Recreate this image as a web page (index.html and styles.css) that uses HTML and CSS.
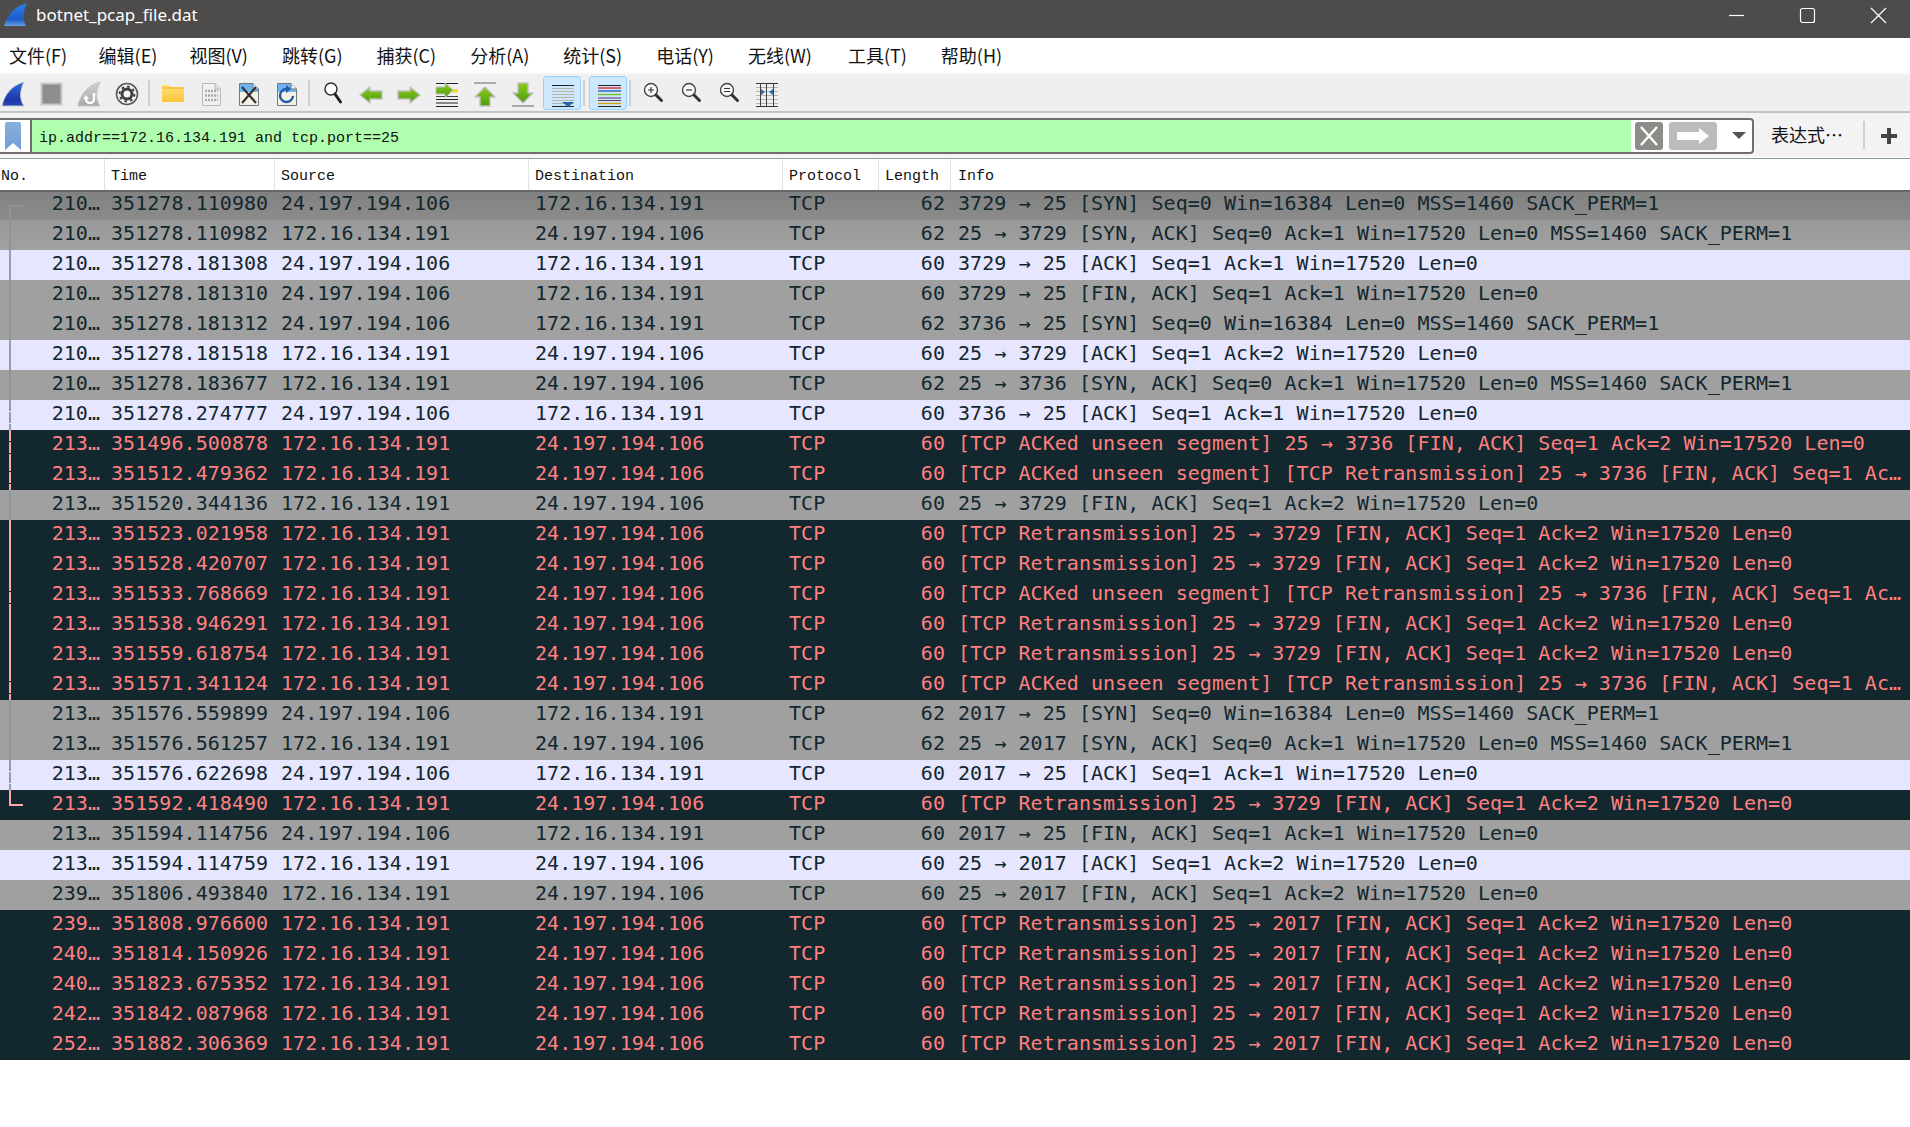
FILE: index.html
```html
<!DOCTYPE html>
<html lang="zh">
<head>
<meta charset="utf-8">
<title>botnet_pcap_file.dat</title>
<link rel="stylesheet" href="styles.css">
</head>
<body>
<svg class="defs" width="0" height="0" aria-hidden="true">
  <defs>
    <linearGradient id="gFin" x1="0" y1="0" x2="0" y2="1"><stop offset="0" stop-color="#2f6fd8"/><stop offset="0.75" stop-color="#1d35a8"/><stop offset="1" stop-color="#2a48b8"/></linearGradient>
    <linearGradient id="gTitleFin" x1="0" y1="0" x2="0" y2="1"><stop offset="0" stop-color="#2a80ee"/><stop offset="0.72" stop-color="#1c5cc8"/><stop offset="1" stop-color="#6aa2e0"/></linearGradient>
    <linearGradient id="gGray" x1="0" y1="0" x2="0" y2="1"><stop offset="0" stop-color="#d0d0d0"/><stop offset="1" stop-color="#a8a8a8"/></linearGradient>
    <linearGradient id="gFolder" x1="0" y1="0" x2="0" y2="1"><stop offset="0" stop-color="#ffe27a"/><stop offset="1" stop-color="#fcc33a"/></linearGradient>
    <linearGradient id="gGreen" x1="0" y1="0" x2="0" y2="1"><stop offset="0" stop-color="#8ccb22"/><stop offset="1" stop-color="#4c9c0c"/></linearGradient>
    <linearGradient id="gMark" x1="0" y1="0" x2="0" y2="1"><stop offset="0" stop-color="#8ab0dc"/><stop offset="1" stop-color="#6d9ed4"/></linearGradient>
  </defs>
</svg>

<header class="titlebar">
  <svg class="app-icon" width="24" height="24" viewBox="0 0 24 24"><path d="M0 23C3 12 11 3 23 0C19 8 18 16 22 23Z" fill="url(#gTitleFin)"/></svg>
  <span class="title-text">botnet_pcap_file.dat</span>
  <div class="winctl">
    <svg width="17" height="17" viewBox="0 0 17 17"><path d="M1 8.5H16" stroke="#fff" stroke-width="1.2"/></svg>
    <svg width="17" height="17" viewBox="0 0 17 17"><rect x="1.500" y="1.500" width="14" height="14" rx="2" fill="none" stroke="#fff" stroke-width="1.2"/></svg>
    <svg width="17" height="17" viewBox="0 0 17 17"><path d="M1 1L16 16M16 1L1 16" stroke="#fff" stroke-width="1.2"/></svg>
  </div>
</header>

<nav class="menubar">
  <span>文件(F)</span><span>编辑(E)</span><span>视图(V)</span><span>跳转(G)</span><span>捕获(C)</span><span>分析(A)</span><span>统计(S)</span><span>电话(Y)</span><span>无线(W)</span><span>工具(T)</span><span>帮助(H)</span>
</nav>

<div class="toolbar">
  <svg class="tool" viewBox="0 0 38 36"><path d="M8 31C10 20 18 10 30 7C26 15 25 24 30 31Z" fill="url(#gFin)" stroke="#c4c8d0" stroke-width="1"/></svg>
  <svg class="tool" viewBox="0 0 38 36"><rect x="9.500" y="8.500" width="20" height="21" fill="#8e8e8e" stroke="#c8c8c8" stroke-width="2"/></svg>
  <svg class="tool" viewBox="0 0 38 36"><path d="M8 31C10 20 18 10 30 7C26 15 25 24 30 31Z" fill="url(#gGray)" stroke="#c4c4c4" stroke-width="1"/><path d="M24 18V24A4 4 0 0 1 16 24" fill="none" stroke="#fff" stroke-width="2.4"/><path d="M13 24H19L16 20Z" fill="#fff"/></svg>
  <svg class="tool" viewBox="0 0 38 36"><circle cx="19" cy="19" r="10.500" fill="#f4f4f4" stroke="#5a5a5a" stroke-width="1.6"/><circle cx="19" cy="19" r="5" fill="none" stroke="#3f3f3f" stroke-width="3"/><circle cx="19" cy="19" r="7.400" fill="none" stroke="#3f3f3f" stroke-width="2" stroke-dasharray="2.6 3.2"/></svg>
  <i class="sep"></i>
  <svg class="tool" viewBox="0 0 38 36"><path d="M8 27V10H15L17 12H30V27Z" fill="url(#gFolder)"/><path d="M8 13H30" stroke="#f0a820" stroke-width="1"/></svg>
  <svg class="tool" viewBox="0 0 38 36"><path d="M10.500 8.500H23L28.500 14V30.500H10.500Z" fill="#f2f2f2" stroke="#b8b8b8"/><path d="M23 8.500V14H28.500" fill="#e0e0e0" stroke="#b8b8b8"/><path d="M13 16H26M13 20.500H26M13 25H26" stroke="#aaa" stroke-width="2.4" stroke-dasharray="2 1"/></svg>
  <svg class="tool" viewBox="0 0 38 36"><path d="M9.500 8.500H23L28.500 14V30.500H9.500Z" fill="#f3f1e4" stroke="#777"/><path d="M10 9H23V14H28V17H10Z" fill="#6eb4ee"/><path d="M23 8.500V14H28.500" fill="#eef6ff" stroke="#777"/><path d="M12 12L26 28M26 12L12 28" stroke="#333" stroke-width="2.2"/></svg>
  <svg class="tool" viewBox="0 0 38 36"><path d="M9.500 8.500H23L28.500 14V30.500H9.500Z" fill="#f3f1e4" stroke="#777"/><path d="M10 9H23V14H28V17H10Z" fill="#6eb4ee"/><path d="M23 8.500V14H28.500" fill="#eef6ff" stroke="#777"/><path d="M25 21A6.500 6.500 0 1 1 19 14" fill="none" stroke="#1f5ca8" stroke-width="2.4"/><path d="M18 10L23 14L18 18Z" fill="#1f5ca8"/></svg>
  <i class="sep"></i>
  <svg class="tool" viewBox="0 0 38 36"><circle cx="17" cy="14" r="6" fill="#fff" stroke="#333" stroke-width="1.5"/><path d="M21 19L26.500 27" stroke="#222" stroke-width="3" stroke-linecap="round"/></svg>
  <svg class="tool" viewBox="0 0 38 36"><path d="M8 20L18 12V16H30V24H18V28Z" fill="url(#gGreen)" stroke="#c0c0c0" stroke-width="1.4" stroke-linejoin="round"/></svg>
  <svg class="tool" viewBox="0 0 38 36"><path d="M30 20L20 12V16H8V24H20V28Z" fill="url(#gGreen)" stroke="#c0c0c0" stroke-width="1.4" stroke-linejoin="round"/></svg>
  <svg class="tool" viewBox="0 0 38 36"><path d="M8 8.500H30M8 24.500H30M8 28H30M8 31.500H30" stroke="#222" stroke-width="1.2"/><rect x="24" y="14" width="6" height="3.500" fill="#f5d33a"/><path d="M8 21.500H30" stroke="#444" stroke-width="1"/><path d="M25 15L17 8V12H8V19H17V23Z" fill="url(#gGreen)" stroke="#c0c0c0"/></svg>
  <svg class="tool" viewBox="0 0 38 36"><path d="M8 8H30" stroke="#aaa" stroke-width="2"/><path d="M19 12L29 22H24V31H14V22H9Z" fill="url(#gGreen)" stroke="#c0c0c0" stroke-width="1.4" stroke-linejoin="round"/></svg>
  <svg class="tool" viewBox="0 0 38 36"><path d="M8 31H30" stroke="#aaa" stroke-width="2"/><path d="M19 28L29 18H24V8H14V18H9Z" fill="url(#gGreen)" stroke="#c0c0c0" stroke-width="1.4" stroke-linejoin="round"/></svg>
  <span class="tool-on first-on"><svg class="tool-in" viewBox="0 0 36 32"><path d="M8 8.500H30M8 29.500H30" stroke="#222"/><path d="M8 11.500H30M8 14.500H30M8 17.500H30M8 20.500H30M8 23.500H30M8 26.500H30" stroke="#b4b4ac"/><path d="M18 25H30L24 30Z" fill="#2c62a8"/></svg></span>
  <i class="sep"></i>
  <span class="tool-on"><svg class="tool-in" viewBox="0 0 36 32"><path d="M8 8.500H31" stroke="#222"/><path d="M8 11H31" stroke="#d0302c" stroke-width="1.4"/><path d="M8 14H31" stroke="#2c5cb0" stroke-width="1.4"/><path d="M8 17.500H31" stroke="#7cb820" stroke-width="1.4"/><path d="M8 21H31" stroke="#7c5f9c" stroke-width="1.4"/><path d="M8 23.500H31" stroke="#5c3c6c"/><path d="M8 26.500H31" stroke="#d4a010" stroke-width="1.4"/><path d="M8 29.500H31" stroke="#222"/></svg></span>
  <i class="sep sep-last"></i>
  <svg class="tool" viewBox="0 0 38 36"><circle cx="17" cy="15" r="6.500" fill="#fafafa" stroke="#444" stroke-width="1.4"/><path d="M14 15H20M17 12V18" stroke="#333" stroke-width="1.2"/><path d="M22 20L27.500 25.500" stroke="#333" stroke-width="3" stroke-linecap="round"/></svg>
  <svg class="tool" viewBox="0 0 38 36"><circle cx="17" cy="15" r="6.500" fill="#fafafa" stroke="#444" stroke-width="1.4"/><path d="M14 15H20" stroke="#333" stroke-width="1.2"/><path d="M22 20L27.500 25.500" stroke="#333" stroke-width="3" stroke-linecap="round"/></svg>
  <svg class="tool" viewBox="0 0 38 36"><circle cx="17" cy="15" r="6.500" fill="#fafafa" stroke="#444" stroke-width="1.4"/><path d="M14 13.500H20M14 16.500H20" stroke="#333" stroke-width="1.2"/><path d="M22 20L27.500 25.500" stroke="#333" stroke-width="3" stroke-linecap="round"/></svg>
  <svg class="tool" viewBox="0 0 38 36"><path d="M8 12.500H30M8 16.500H30M8 20.500H30M8 24.500H30M8 28.500H30" stroke="#b4b4b4" stroke-width="1"/><path d="M8 8.500H30M8 31.500H30" stroke="#333" stroke-width="1"/><path d="M12.500 8V32M18.500 8V32M25.500 8V32" stroke="#444" stroke-width="1"/><path d="M13 14L17 17L13 20ZM25 14L21 17L25 20Z" fill="#2c68b4"/></svg>
</div>

<div class="filterbar">
  <div class="filter-box">
    <div class="mark-btn"><svg width="16" height="28" viewBox="0 0 16 28"><path d="M2 0H14Q16 0 16 2V28L8 21L0 28V2Q0 0 2 0Z" fill="url(#gMark)"/></svg></div>
    <div class="filter-input">ip.addr==172.16.134.191 and tcp.port==25</div>
    <div class="filter-btns">
      <svg width="28" height="28" viewBox="0 0 28 28"><rect width="28" height="28" rx="3" fill="#8c8c88"/><path d="M6 5L22 23M22 5L6 23" stroke="#fff" stroke-width="2.4"/></svg>
      <svg width="48" height="28" viewBox="0 0 48 28"><rect width="48" height="28" rx="3" fill="#bcbcbc"/><path d="M9 10H30V6L40 14L30 22V18H9Q8 18 8 17V11Q8 10 9 10Z" fill="#fff"/></svg>
      <svg class="drop" width="14" height="7" viewBox="0 0 14 7"><path d="M0 0H14L7 7Z" fill="#555"/></svg>
    </div>
  </div>
  <span class="expr">表达式…</span>
  <i class="filter-sep"></i>
  <svg class="plus" width="16" height="16" viewBox="0 0 16 16"><path d="M6 0H10V6H16V10H10V16H6V10H0V6H6Z" fill="#444"/></svg>
</div>

<div class="list-head">
  <span class="right-off">No.</span><span>Time</span><span>Source</span><span>Destination</span><span>Protocol</span><span>Length</span><span>Info</span>
</div>

<main class="list">
  <div class="row gray head1 rel start"><span class="num">210…</span><span>351278.110980</span><span>24.197.194.106</span><span>172.16.134.191</span><span>TCP</span><span class="num">62</span><span>3729 → 25 [SYN] Seq=0 Win=16384 Len=0 MSS=1460 SACK_PERM=1</span></div>
  <div class="row gray head2 rel"><span class="num">210…</span><span>351278.110982</span><span>172.16.134.191</span><span>24.197.194.106</span><span>TCP</span><span class="num">62</span><span>25 → 3729 [SYN, ACK] Seq=0 Ack=1 Win=17520 Len=0 MSS=1460 SACK_PERM=1</span></div>
  <div class="row light rel"><span class="num">210…</span><span>351278.181308</span><span>24.197.194.106</span><span>172.16.134.191</span><span>TCP</span><span class="num">60</span><span>3729 → 25 [ACK] Seq=1 Ack=1 Win=17520 Len=0</span></div>
  <div class="row gray rel"><span class="num">210…</span><span>351278.181310</span><span>24.197.194.106</span><span>172.16.134.191</span><span>TCP</span><span class="num">60</span><span>3729 → 25 [FIN, ACK] Seq=1 Ack=1 Win=17520 Len=0</span></div>
  <div class="row gray rel tick"><span class="num">210…</span><span>351278.181312</span><span>24.197.194.106</span><span>172.16.134.191</span><span>TCP</span><span class="num">62</span><span>3736 → 25 [SYN] Seq=0 Win=16384 Len=0 MSS=1460 SACK_PERM=1</span></div>
  <div class="row light rel"><span class="num">210…</span><span>351278.181518</span><span>172.16.134.191</span><span>24.197.194.106</span><span>TCP</span><span class="num">60</span><span>25 → 3729 [ACK] Seq=1 Ack=2 Win=17520 Len=0</span></div>
  <div class="row gray rel tick"><span class="num">210…</span><span>351278.183677</span><span>172.16.134.191</span><span>24.197.194.106</span><span>TCP</span><span class="num">62</span><span>25 → 3736 [SYN, ACK] Seq=0 Ack=1 Win=17520 Len=0 MSS=1460 SACK_PERM=1</span></div>
  <div class="row light rel tick"><span class="num">210…</span><span>351278.274777</span><span>24.197.194.106</span><span>172.16.134.191</span><span>TCP</span><span class="num">60</span><span>3736 → 25 [ACK] Seq=1 Ack=1 Win=17520 Len=0</span></div>
  <div class="row bad rel tick"><span class="num">213…</span><span>351496.500878</span><span>172.16.134.191</span><span>24.197.194.106</span><span>TCP</span><span class="num">60</span><span>[TCP ACKed unseen segment] 25 → 3736 [FIN, ACK] Seq=1 Ack=2 Win=17520 Len=0</span></div>
  <div class="row bad rel tick"><span class="num">213…</span><span>351512.479362</span><span>172.16.134.191</span><span>24.197.194.106</span><span>TCP</span><span class="num">60</span><span>[TCP ACKed unseen segment] [TCP Retransmission] 25 → 3736 [FIN, ACK] Seq=1 Ac…</span></div>
  <div class="row gray rel"><span class="num">213…</span><span>351520.344136</span><span>172.16.134.191</span><span>24.197.194.106</span><span>TCP</span><span class="num">60</span><span>25 → 3729 [FIN, ACK] Seq=1 Ack=2 Win=17520 Len=0</span></div>
  <div class="row bad rel"><span class="num">213…</span><span>351523.021958</span><span>172.16.134.191</span><span>24.197.194.106</span><span>TCP</span><span class="num">60</span><span>[TCP Retransmission] 25 → 3729 [FIN, ACK] Seq=1 Ack=2 Win=17520 Len=0</span></div>
  <div class="row bad rel"><span class="num">213…</span><span>351528.420707</span><span>172.16.134.191</span><span>24.197.194.106</span><span>TCP</span><span class="num">60</span><span>[TCP Retransmission] 25 → 3729 [FIN, ACK] Seq=1 Ack=2 Win=17520 Len=0</span></div>
  <div class="row bad rel tick"><span class="num">213…</span><span>351533.768669</span><span>172.16.134.191</span><span>24.197.194.106</span><span>TCP</span><span class="num">60</span><span>[TCP ACKed unseen segment] [TCP Retransmission] 25 → 3736 [FIN, ACK] Seq=1 Ac…</span></div>
  <div class="row bad rel"><span class="num">213…</span><span>351538.946291</span><span>172.16.134.191</span><span>24.197.194.106</span><span>TCP</span><span class="num">60</span><span>[TCP Retransmission] 25 → 3729 [FIN, ACK] Seq=1 Ack=2 Win=17520 Len=0</span></div>
  <div class="row bad rel"><span class="num">213…</span><span>351559.618754</span><span>172.16.134.191</span><span>24.197.194.106</span><span>TCP</span><span class="num">60</span><span>[TCP Retransmission] 25 → 3729 [FIN, ACK] Seq=1 Ack=2 Win=17520 Len=0</span></div>
  <div class="row bad rel tick"><span class="num">213…</span><span>351571.341124</span><span>172.16.134.191</span><span>24.197.194.106</span><span>TCP</span><span class="num">60</span><span>[TCP ACKed unseen segment] [TCP Retransmission] 25 → 3736 [FIN, ACK] Seq=1 Ac…</span></div>
  <div class="row gray rel tick"><span class="num">213…</span><span>351576.559899</span><span>24.197.194.106</span><span>172.16.134.191</span><span>TCP</span><span class="num">62</span><span>2017 → 25 [SYN] Seq=0 Win=16384 Len=0 MSS=1460 SACK_PERM=1</span></div>
  <div class="row gray rel tick"><span class="num">213…</span><span>351576.561257</span><span>172.16.134.191</span><span>24.197.194.106</span><span>TCP</span><span class="num">62</span><span>25 → 2017 [SYN, ACK] Seq=0 Ack=1 Win=17520 Len=0 MSS=1460 SACK_PERM=1</span></div>
  <div class="row light rel tick"><span class="num">213…</span><span>351576.622698</span><span>24.197.194.106</span><span>172.16.134.191</span><span>TCP</span><span class="num">60</span><span>2017 → 25 [ACK] Seq=1 Ack=1 Win=17520 Len=0</span></div>
  <div class="row bad rel end"><span class="num">213…</span><span>351592.418490</span><span>172.16.134.191</span><span>24.197.194.106</span><span>TCP</span><span class="num">60</span><span>[TCP Retransmission] 25 → 3729 [FIN, ACK] Seq=1 Ack=2 Win=17520 Len=0</span></div>
  <div class="row gray"><span class="num">213…</span><span>351594.114756</span><span>24.197.194.106</span><span>172.16.134.191</span><span>TCP</span><span class="num">60</span><span>2017 → 25 [FIN, ACK] Seq=1 Ack=1 Win=17520 Len=0</span></div>
  <div class="row light"><span class="num">213…</span><span>351594.114759</span><span>172.16.134.191</span><span>24.197.194.106</span><span>TCP</span><span class="num">60</span><span>25 → 2017 [ACK] Seq=1 Ack=2 Win=17520 Len=0</span></div>
  <div class="row gray"><span class="num">239…</span><span>351806.493840</span><span>172.16.134.191</span><span>24.197.194.106</span><span>TCP</span><span class="num">60</span><span>25 → 2017 [FIN, ACK] Seq=1 Ack=2 Win=17520 Len=0</span></div>
  <div class="row bad"><span class="num">239…</span><span>351808.976600</span><span>172.16.134.191</span><span>24.197.194.106</span><span>TCP</span><span class="num">60</span><span>[TCP Retransmission] 25 → 2017 [FIN, ACK] Seq=1 Ack=2 Win=17520 Len=0</span></div>
  <div class="row bad"><span class="num">240…</span><span>351814.150926</span><span>172.16.134.191</span><span>24.197.194.106</span><span>TCP</span><span class="num">60</span><span>[TCP Retransmission] 25 → 2017 [FIN, ACK] Seq=1 Ack=2 Win=17520 Len=0</span></div>
  <div class="row bad"><span class="num">240…</span><span>351823.675352</span><span>172.16.134.191</span><span>24.197.194.106</span><span>TCP</span><span class="num">60</span><span>[TCP Retransmission] 25 → 2017 [FIN, ACK] Seq=1 Ack=2 Win=17520 Len=0</span></div>
  <div class="row bad"><span class="num">242…</span><span>351842.087968</span><span>172.16.134.191</span><span>24.197.194.106</span><span>TCP</span><span class="num">60</span><span>[TCP Retransmission] 25 → 2017 [FIN, ACK] Seq=1 Ack=2 Win=17520 Len=0</span></div>
  <div class="row bad"><span class="num">252…</span><span>351882.306369</span><span>172.16.134.191</span><span>24.197.194.106</span><span>TCP</span><span class="num">60</span><span>[TCP Retransmission] 25 → 2017 [FIN, ACK] Seq=1 Ack=2 Win=17520 Len=0</span></div>
</main>
</body>
</html>
```

FILE: styles.css
```css
* { box-sizing: border-box; }
html, body { margin: 0; padding: 0; background: #fff; overflow: hidden; }
body { width: 1910px; height: 1127px; font-family: "Open Sans", "Noto Sans", sans-serif; }
.defs { position: absolute; }

.titlebar { height: 38px; background: #4e4c4a; color: #fff; display: flex; align-items: flex-start; padding-left: 4px; }
.app-icon { flex: none; margin-top: 3px; }
.title-text { margin-left: 8px; font-size: 17px; line-height: 30px; font-family: "Noto Sans", sans-serif; }
.winctl { margin-left: auto; display: flex; gap: 54px; padding: 7px 23px 0 0; }

.menubar { height: 35px; padding-bottom: 2px; background: #fff; display: flex; align-items: center; gap: 34px; padding-left: 9px; font-family: "Noto Sans CJK SC", sans-serif; font-size: 18px; color: #111; }
.menubar span:nth-child(1) { margin-right: -2.5px; }
.menubar span:nth-child(2) { margin-right: -2px; }
.menubar span:nth-child(9) { margin-right: 2px; }

.toolbar { height: 40px; border-top: 2px solid #f4f4f4; border-bottom: 2px solid #c2c2c2; background: #efefef; display: flex; align-items: center; padding-left: 0; }
.toolbar > :first-child { margin-left: -6px; }
.tool { width: 38px; height: 36px; flex: none; }
.tool-on { width: 38px; height: 34px; flex: none; background: #cce8ff; border: 1px solid #99d1ff; border-radius: 3px; display: block; }
.first-on { margin-left: 1px; }
.tool-in { display: block; width: 36px; height: 32px; }
.sep { width: 2px; height: 26px; flex: none; background: #d0d0d0; margin: 0 4px 0 2px; }
.sep-last { margin-right: 3px; }

.filterbar { height: 45px; padding-top: 5px; background: #f3f3f3; display: flex; align-items: flex-start; border-bottom: 1px solid #fff; }
.filter-box { width: 1754px; height: 36px; flex: none; background: #fff; border: 2px solid #6e6e6e; border-left: 0; border-radius: 0 4px 4px 0; display: flex; }
.mark-btn { width: 32px; flex: none; padding: 2px 0 0 5px; background: #fff; border-right: 2px solid #6e6e6e; }
.filter-input { width: 1599px; flex: none; background: #afffaf; padding-left: 7px; font: 15px/37px "Liberation Mono", monospace; color: #111; overflow: hidden; }
.filter-btns { flex: 1; display: flex; align-items: flex-start; padding: 2px 0 0 4px; gap: 6px; }
.drop { margin: 10px 0 0 9px; }
.expr { margin: 3px 0 0 17px; width: 73px; font: 18px/26px "Noto Sans CJK SC", sans-serif; color: #111; }
.filter-sep { width: 2px; height: 28px; margin: 3px 0 0 19px; background: #d0d0d0; }
.plus { margin: 10px 0 0 16px; }

.list-head, .row { display: grid; grid-template-columns: 105px 170px 254px 254px 96px 72px 1fr; }
.list-head { height: 32px; border-top: 1px solid #8899a0; background: #fff; font: 15px/35px "Liberation Mono", monospace; color: #111; }
.list-head span { padding-left: 6px; border-right: 1px solid #e2e2e2; height: 31px; overflow: hidden; }
.list-head .right-off { padding-left: 1px; }
.list-head span:last-child { border-right: 0; padding-left: 7px; }

.list { border-top: 2px solid #666; }
.row { position: relative; height: 30px; font: 20px/26px "DejaVu Sans Mono", monospace; letter-spacing: 0.05px; white-space: pre; overflow: hidden; --rel: transparent; }
.list .row:first-child { height: 28px; line-height: 22px; }
.row span { padding-left: 6px; }
.row span:last-child { padding-left: 7px; }
.row .num { padding: 0 6px 0 0; text-align: right; }
.row span:first-child { padding-right: 5px; }
.gray { background: #a0a0a0; color: #12272e; --rel: #8c979b; }
.light { background: #e7e6ff; color: #12272e; --rel: #98a0a6; }
.bad { background: #12272e; color: #ff8080; --rel: #ffa8a8; }
.head1 { background: linear-gradient(#828282, #8b8b8b); }
.head2 { background: linear-gradient(#999, #a0a0a0); }

.rel::before { content: ""; position: absolute; left: 9px; top: 0; bottom: 0; width: 2px; background: var(--rel); }
.tick::before { background: linear-gradient(var(--rel) 0 11px, transparent 11px 12px, var(--rel) 12px 23px, transparent 23px 24px, var(--rel) 24px); }
.start::before { top: 13px; }
.end::before { bottom: 14px; }
.start::after, .end::after { content: ""; position: absolute; left: 9px; width: 14px; height: 2px; background: var(--rel); }
.start::after { top: 13px; }
.end::after { top: 14px; }
```
